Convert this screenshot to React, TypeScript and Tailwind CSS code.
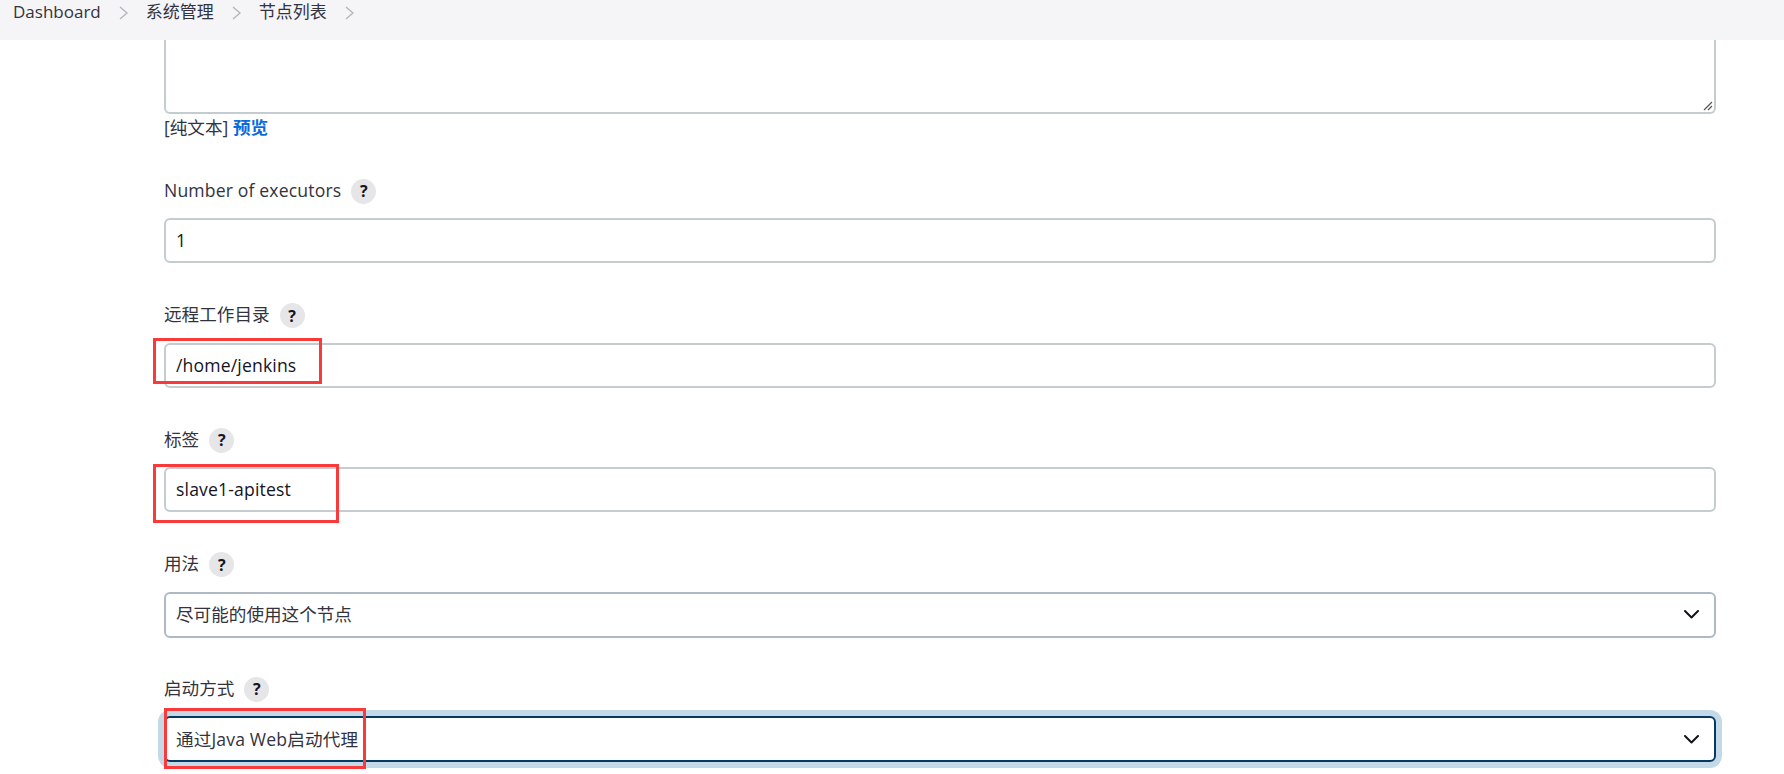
const font = "font-['Open_Sans','Noto_Sans_CJK_SC',sans-serif]";

function HelpBadge() {
  return (
    <span className="flex h-[25px] w-[25px] items-center justify-center rounded-full bg-[#e6e6e8] text-[16px] font-bold text-[#14141f]">
      ?
    </span>
  );
}

function FieldLabel({ text, latin }: { text: string; latin?: boolean }) {
  return (
    <div className="flex h-[26px] items-center gap-[10px] text-[17.6px] text-[#333340]">
      <span className={latin ? "pb-[2px] tracking-[0.15px]" : "pb-[2px]"}>{text}</span>
      <HelpBadge />
    </div>
  );
}

function Crumb({ text }: { text: string }) {
  return (
    <>
      <span>{text}</span>
      <svg width="9" height="14" viewBox="0 0 9 14" fill="none" className="mx-[18px] mt-[5px] text-[#b4b4bf]">
        <path d="M1 1 8 7 1 13" stroke="currentColor" strokeWidth="1.4" />
      </svg>
    </>
  );
}

function Chevron() {
  return (
    <svg width="15" height="9" viewBox="0 0 15 9" fill="none" className="text-[#14141f]">
      <path d="M1 1 7.5 7.5 14 1" stroke="currentColor" strokeWidth="2" strokeLinecap="round" strokeLinejoin="round" />
    </svg>
  );
}

function RedBox({ className }: { className: string }) {
  return <div className={`pointer-events-none absolute border-[3px] border-[#f83a3a] ${className}`} />;
}

function TextField({ label, value, box, latin }: { label: string; value: string; box?: string; latin?: boolean }) {
  return (
    <div className="h-[124.5px] pt-[13px]">
      <FieldLabel text={label} latin={latin} />
      <div className="relative mt-[14px]">
        <div className="flex h-[45px] items-center rounded-md border-2 border-[#c3ccd1] bg-white px-[10px] text-[17.6px] tracking-[0.15px] text-[#14141f]">
          {value}
        </div>
        {box && <RedBox className={box} />}
      </div>
    </div>
  );
}

export default function App() {
  return (
    <div className={`flex h-[774px] flex-col overflow-hidden bg-white ${font}`}>
      {/* Breadcrumb bar */}
      <div className="flex h-10 shrink-0 items-start bg-[#f5f5f8] pl-[13px] pt-[1px] text-[17px] leading-[22px] text-[#333340]">
        <Crumb text="Dashboard" />
        <Crumb text="系统管理" />
        <Crumb text="节点列表" />
      </div>

      <div className="pl-[164px] pr-[68px]">
        {/* Description textarea, scrolled under the bar */}
        <div className="relative h-[74px] rounded-b-md border-2 border-t-0 border-[#c3ccd1]">
          <svg width="10" height="10" viewBox="0 0 10 10" className="absolute bottom-[1px] right-[1px] text-[#555]">
            <path d="M1 9 9 1M5 9 9 5" stroke="currentColor" strokeWidth="1.2" />
          </svg>
        </div>
        <div className="mt-[2px] h-[22px] text-[17.6px] leading-[22px] text-[#333340]">
          [纯文本] <span className="font-bold text-[#0b6bdc]">预览</span>
        </div>

        <div className="pt-[27px]">
          <TextField label="Number of executors" value="1" latin />
          <TextField label="远程工作目录" value="/home/jenkins" box="left-[-11px] top-[-5px] h-[46px] w-[169px]" />
          <TextField label="标签" value="slave1-apitest" box="left-[-11px] top-[-3px] h-[59px] w-[186px]" />

          <div className="h-[124.5px] pt-[13px]">
            <FieldLabel text="用法" />
            <div className="mt-[14px] flex h-[46px] items-center justify-between rounded-md border-2 border-[#aeb9c3] bg-white pl-[10px] pr-[15px] text-[17.6px] text-[#333340]">
              尽可能的使用这个节点
              <Chevron />
            </div>
          </div>

          <div className="pt-[13px]">
            <FieldLabel text="启动方式" />
            <div className="relative mt-[14px]">
              <div className="flex h-[46px] items-center justify-between rounded-md border-2 border-[#043a62] bg-white pl-[10px] pr-[15px] text-[17.6px] tracking-[0.15px] text-[#333340] shadow-[0_0_0_6px_#c3d9e7]">
                通过Java Web启动代理
                <Chevron />
              </div>
              <RedBox className="left-0 top-[-8px] h-[61px] w-[202px]" />
            </div>
          </div>
        </div>
      </div>
    </div>
  );
}
